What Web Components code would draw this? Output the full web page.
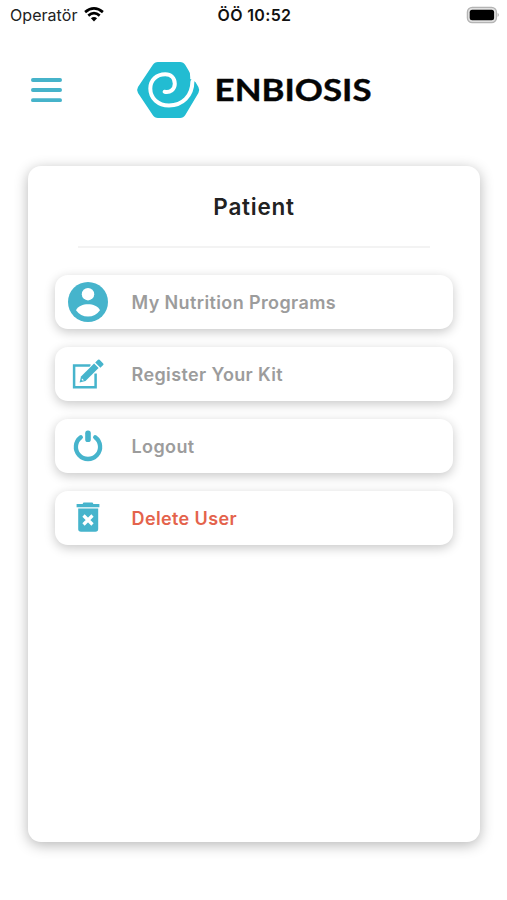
<!DOCTYPE html>
<html lang="tr">
<head>
<meta charset="utf-8">
<meta name="viewport" content="width=device-width, initial-scale=1">
<title>Enbiosis</title>
<style>
html, body { margin: 0; height: 100%; background: #fff; overflow: hidden; }
body { font-family: Inter, "Liberation Sans", sans-serif; color: #222; }
</style>
</head>
<body>
<app-screen>
  <status-bar slot="status"></status-bar>
  <app-header slot="header"></app-header>
  <menu-card heading="Patient">
    <menu-item icon="account">My Nutrition Programs</menu-item>
    <menu-item icon="edit">Register Your Kit</menu-item>
    <menu-item icon="power">Logout</menu-item>
    <menu-item icon="trash" style="--label:#e4634c">Delete User</menu-item>
  </menu-card>
</app-screen>
<script>
const define = (name, html, setup) => customElements.define(name, class extends HTMLElement {
  constructor() {
    super();
    this.attachShadow({ mode: 'open' }).innerHTML = html;
  }
  connectedCallback() { if (setup) setup(this, this.shadowRoot); }
});

const icons = {
  account: `<circle cx="22" cy="22" r="20"/><circle cx="22" cy="14.2" r="6.2" fill="#fff"/><path fill="#fff" d="M10 30.3C12 26.2 17 24.3 22 24.3S32 26.2 34 30.3C31 34.6 27 36.6 22 36.6S13 34.6 10 30.3Z"/>`,
  edit: `<path fill="none" stroke="currentColor" stroke-width="2.5" d="M24.5 13.6H8.1V35.2H29.6V21.5"/><path stroke="#fff" stroke-width="1.6" paint-order="stroke" d="M13.6 30.4 15 24.6 28.1 11.5 32.6 16 19.5 29.1Z"/><path d="M29.2 10.5 32 7.8Q32.8 7 33.6 7.8L37.2 11.4Q38 12.2 37.2 13L34.4 15.7Z"/><path fill="#fff" d="m16 26.4 1.9 1.9-1.2.4-1.1-1.1Z"/>`,
  power: `<path fill="none" stroke="currentColor" stroke-width="4.3" stroke-linecap="round" d="M14.8 13.2A12.1 12.1 0 1 0 29.2 13.2"/><rect x="19.2" y="6.6" width="5.6" height="11.4" rx="2.6"/>`,
  trash: `<path d="M16.8 8V7.4Q16.9 6.6 18 6.6H26Q27.1 6.6 27.2 7.4V8H33.4V11.2H10.6V8Z"/><path d="M12.2 12.5H32.2V33Q32.2 35.8 29.4 35.8H15Q12.2 35.8 12.2 33Z"/><path fill="none" stroke="#fff" stroke-width="3.2" d="m17.5 19.5 9 9m0-9-9 9"/>`
};

define('app-screen', `<style>
:host{display:flex;flex-direction:column;width:507px;height:900px;background:#fff}
</style><slot name="status"></slot><slot name="header"></slot><slot></slot>`);

define('status-bar', `<style>
:host{display:grid;grid-template-columns:1fr auto 1fr;align-items:center;height:30px;padding:0 8px 0 10px;box-sizing:border-box;font-size:16px;line-height:30px;color:#222}
.left{display:flex;align-items:center;gap:7px}
.carrier{letter-spacing:.05px}
.time{font-weight:600;letter-spacing:.35px;color:#111}
svg{display:block}.left svg{margin-top:-1px}.battery{justify-self:end;margin-top:-1px}
</style>
<div class="left"><span class="carrier">Operatör</span>
<svg width="20" height="15" viewBox="0 0 20 15" fill="none" stroke="#000" stroke-width="2.7"><path d="M1.1 5.1Q10-2.2 18.9 5.1"/><path d="M4.3 8.6Q10 3.8 15.7 8.6"/><path fill="#000" stroke="none" d="M6.9 11.3Q10 8.7 13.1 11.3L10 14.6Z"/></svg></div>
<span class="time">ÖÖ 10:52</span>
<svg class="battery" width="33" height="18" viewBox="0 0 33 18"><rect x="1.4" y="1.3" width="29" height="15.4" rx="4.8" fill="#e0e0e0" stroke="#b4b4b4" stroke-width="1.3"/><rect x="3.7" y="3.8" width="24.4" height="10.4" rx="2.5"/><path d="M31.6 6.7Q34 8.9 31.6 11.1Z" fill="#aaa"/></svg>`);

define('app-header', `<style>
:host{display:flex;align-items:center;height:120px;padding-left:31px;box-sizing:border-box}
svg{display:block}.brand{display:flex;align-items:center;margin-left:74px;gap:12px}
text{font-family:Lato,"Liberation Sans",sans-serif;font-weight:700;font-size:30.5px}
</style>
<svg width="31" height="26" viewBox="0 0 31 26" stroke="#46b3ca" stroke-width="3.8" stroke-linecap="round"><path d="M1.9 3h27.2M1.9 13h27.2M1.9 23.2h27.2"/></svg>
<div class="brand">
<svg width="64" height="58" viewBox="0 0 64 58"><path fill="#22bcd2" d="M22 1H44Q47.5 1 49.3 4L62.4 26Q64 29 62.4 32L49.3 54Q47.5 57 44 57H22Q18.5 57 16.7 54L2 32Q.2 29 2 26L16.7 4Q18.5 1 22 1Z"/><path fill="#fff" d="M50 1Q54.5 8 54.2 18L58.6 20.5 66 24V1Z"/><path fill="none" stroke="#fff" stroke-width="4" stroke-linecap="round" d="M28.6 30.8C34 32 38.8 28.5 38.8 22.8C38.8 17 35 13.3 29.3 13.3C20.5 13.3 14.3 19.2 14.3 27.6C14.3 37.6 22.2 44.5 33 44.5C46.5 44.5 56.3 35 56.4 20.5"/></svg>
<svg width="164" height="40" viewBox="0 0 164 40"><text x="2.6" y="31.3" textLength="157" lengthAdjust="spacingAndGlyphs" fill="#050505" stroke="#050505" stroke-width=".35">ENBIOSIS</text></svg>
</div>`);

define('menu-card', `<style>
:host{display:flex;flex-direction:column;align-items:stretch;width:452px;height:676px;margin:16px 0 0 28px;padding:0 27px;box-sizing:border-box;border-radius:13px;background:#fff;box-shadow:0 3px 14px rgba(0,0,0,.29)}
h1{margin:0;height:80px;line-height:82px;text-align:center;font-size:22.5px;font-weight:600;letter-spacing:.75px;color:#222}
hr{width:352px;height:2px;margin:0 auto 27px 23px;border:0;background:#f3f3f3}
.items{display:flex;flex-direction:column;gap:18px}
</style><h1></h1><hr><div class="items"><slot></slot></div>`, (host, root) => {
  root.querySelector('h1').textContent = host.getAttribute('heading');
});

define('menu-item', `<style>
:host{display:flex;align-items:center;height:54px;width:398px;padding-left:11px;box-sizing:border-box;gap:21.5px;border-radius:13px;background:#fff;box-shadow:0 3px 11px rgba(0,0,0,.22);color:var(--label,#9c9c9c);font-size:18px;font-weight:600;letter-spacing:.38px;white-space:nowrap}
svg{display:block;color:#46b4cc;fill:currentColor}
</style><svg width="44" height="44" viewBox="0 0 44 44"></svg><span><slot></slot></span>`, (host, root) => {
  root.querySelector('svg').innerHTML = icons[host.getAttribute('icon')];
});
</script>
</body>
</html>
